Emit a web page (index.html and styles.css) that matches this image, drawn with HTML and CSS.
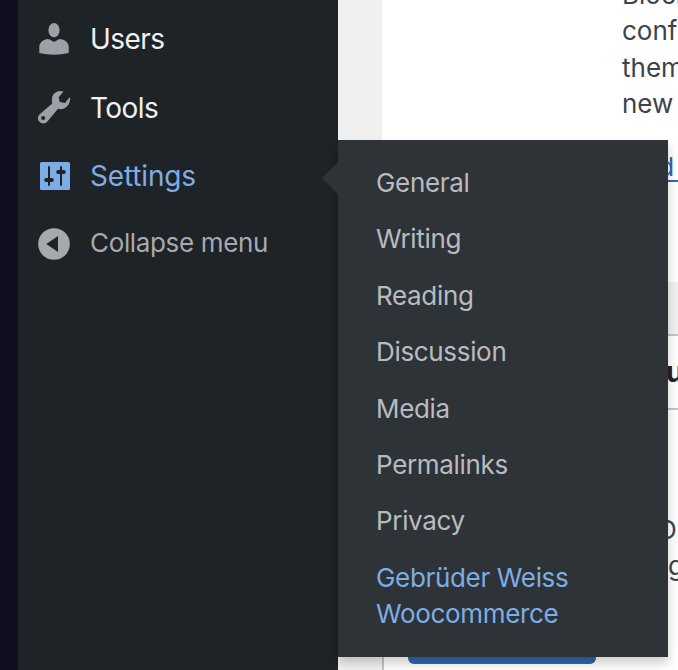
FILE: index.html
```html
<!DOCTYPE html>
<html lang="en">
<head>
<meta charset="utf-8">
<title>Settings</title>
<link rel="stylesheet" href="styles.css">
</head>
<body>
<div class="screen">
  <nav class="sidebar">
    <a class="item"><svg class="icon" viewBox="0 0 40 40"><ellipse cx="20" cy="11.2" rx="5.6" ry="7.2"/><path d="M5.3 34V27.5C5.5 23.5 9.5 20.3 14 20C16.5 20 17.5 22.7 20 22.7S23.5 20 26 20C30.5 20.3 34.5 23.5 34.7 27.5V34Q20 37.4 5.3 34Z"/></svg><span class="short">Users</span></a>
    <a class="item"><svg class="icon" viewBox="0 0 40 40"><path fill-rule="evenodd" d="M29.5 4.6C24 2.6 18.8 6 18 11Q17.6 14 18.2 16.4L5.7 27.2A5.3 5.3 0 1 0 13.4 34.4L24 21.8C30 23.4 36 19 36.2 11.2L35.6 10.3L31 16L25.8 14.9L24.6 10.2ZM9.2 28.9A2.1 2.1 0 1 1 9.1 33.1A2.1 2.1 0 1 1 9.2 28.9Z"/></svg><span class="short">Tools</span></a>
    <a class="item current"><svg class="icon" viewBox="0 0 40 40"><rect x="6" y="6" width="30" height="28" rx="1.5"/><g class="cut"><path d="M15 11V29M27 11V29"/><path class="knob" d="M12.2 24H17.8M24.2 16H29.8"/></g></svg><span>Settings</span></a>
    <a class="item collapse"><svg class="icon" viewBox="0 0 40 40"><path fill-rule="evenodd" d="M20 5.2A15.8 15.8 0 1 0 20 36.8A15.8 15.8 0 1 0 20 5.2ZM24 13V29L12.3 21Z"/></svg><span>Collapse menu</span></a>
  </nav>
  <main class="content">
    <section class="intro">
      <p>Block<br>configure<br>themes<br>new ones</p>
      <a class="link">Read more</a>
    </section>
    <div class="gap"></div>
    <section class="panel">
      <header><b>u</b></header>
      <p class="note"><span class="d">D</span><br><span>g</span></p>
      <div class="button"></div>
    </section>
  </main>
  <ul class="submenu">
    <li>General</li>
    <li>Writing</li>
    <li>Reading</li>
    <li>Discussion</li>
    <li>Media</li>
    <li>Permalinks</li>
    <li>Privacy</li>
    <li class="active">Gebrüder Weiss<br>Woocommerce</li>
  </ul>
</div>
</body>
</html>
```
FILE: styles.css
```css
* { box-sizing: border-box; }
body { margin: 0; font: 430 26px/36.4px Inter, "Liberation Sans", sans-serif; color: #3c434a; }
.screen { position: relative; display: flex; width: 678px; height: 670px; overflow: hidden; background: #f0f0f1; }
.sidebar { flex: none; width: 338px; padding-top: 5px; background: #1e2327; border-left: 18px solid #110e1f; }
.item { display: flex; align-items: center; gap: 16px; height: 68.3px; padding-left: 16px; font-size: 28px; color: #f0f0f1; white-space: nowrap; }
.short { letter-spacing: -0.55px; padding-top: 1px; }
.icon { flex: none; width: 40px; height: 40px; fill: #9ca1a8; }
.current { color: #7eade5; letter-spacing: -0.15px; }
.current .icon { fill: #7eade5; }
.cut { fill: none; stroke: #1e2327; stroke-width: 2; stroke-linecap: round; }
.knob { stroke-width: 4; }
.collapse { height: 66px; color: #a7aaad; font-size: 26px; letter-spacing: -0.35px; }
.collapse .icon { fill: #a7aaad; }
.content { flex: none; width: 340px; padding-left: 44px; overflow: hidden; }
.intro { height: 282px; padding-left: 240px; background: #fff; white-space: nowrap; }
.intro p { margin: 0; padding-top: 1px; transform: translateY(-24px); }
.link { display: block; margin: 2px 0 0 -10px; color: #2f68ad; text-decoration: underline; text-decoration-thickness: 2px; text-underline-offset: 4px; }
.gap { height: 52px; }
.panel { height: 336px; background: #fff; border-left: 2px solid #c3c4c7; border-top: 2px solid #c3c4c7; }
.panel header { height: 74px; padding: 18px 0 0 282px; border-bottom: 2px solid #c3c4c7; font-size: 28px; color: #1d2327; }
.note { margin: 0; padding: 102px 0 0 284px; }
.d { margin-left: -10px; }
.button { width: 188px; height: 60px; margin: 19px 0 0 24px; border-radius: 6px; background: #2f68a8; }
.submenu { position: absolute; left: 338px; top: 140px; width: 330px; height: 517px; margin: 0; padding: 15px 0 0 38px; list-style: none; background: #2e3337; color: #b8bcc0; box-shadow: 0 6px 10px rgba(0,0,0,.2); letter-spacing: -0.33px; white-space: nowrap; }
.submenu::before { content: ""; position: absolute; left: -16px; top: 22px; border: 16px solid transparent; border-left: 0; border-right-color: #2e3337; }
.submenu li { padding: 10px 0; }
.submenu .active { color: #7eade5; }
```
